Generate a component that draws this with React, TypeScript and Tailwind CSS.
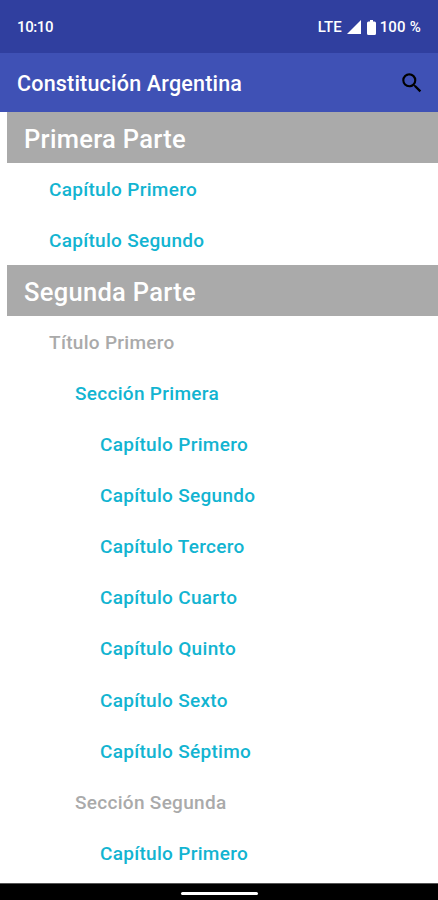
type Row = { text: string; kind: "header" | "link" | "muted"; level: number };

const rows: Row[] = [
  { text: "Primera Parte", kind: "header", level: 0 },
  { text: "Capítulo Primero", kind: "link", level: 1 },
  { text: "Capítulo Segundo", kind: "link", level: 1 },
  { text: "Segunda Parte", kind: "header", level: 0 },
  { text: "Título Primero", kind: "muted", level: 1 },
  { text: "Sección Primera", kind: "link", level: 2 },
  { text: "Capítulo Primero", kind: "link", level: 3 },
  { text: "Capítulo Segundo", kind: "link", level: 3 },
  { text: "Capítulo Tercero", kind: "link", level: 3 },
  { text: "Capítulo Cuarto", kind: "link", level: 3 },
  { text: "Capítulo Quinto", kind: "link", level: 3 },
  { text: "Capítulo Sexto", kind: "link", level: 3 },
  { text: "Capítulo Séptimo", kind: "link", level: 3 },
  { text: "Sección Segunda", kind: "muted", level: 2 },
  { text: "Capítulo Primero", kind: "link", level: 3 },
];

const indent = ["pl-[17px]", "pl-[42px]", "pl-[68px]", "pl-[93px]"];
const look = {
  header: "bg-[#aaaaaa] text-white text-[25.5px] tracking-[0.3px]",
  link: "text-[#12b4d1] text-[19px] tracking-[0.3px]",
  muted: "text-[#aaaaaa] text-[19px] tracking-[0.3px]",
};

export default function App() {
  return (
    <div className="flex h-[900px] w-[438px] flex-col overflow-hidden bg-white font-[Roboto,sans-serif] font-medium">
      <div className="flex h-[53px] shrink-0 items-center justify-between bg-[#303f9f] pr-[17px] pl-[17px] text-[15px] text-white">
        <span className="pt-px tracking-[-0.4px]">10:10</span>
        <div className="flex items-center pt-px">
          <span>LTE</span>
          <svg className="ml-[5px] h-[14px] w-[14px]" viewBox="0 0 14 14" fill="currentColor"><path d="M14 0v14H0z" /></svg>
          <svg className="ml-[6px] h-[15px] w-[9px]" viewBox="0 0 9 15" fill="currentColor"><path d="M3 0h3v1.5h1.5q1.5 0 1.5 1.5v10.5q0 1.5-1.5 1.5h-6q-1.5 0-1.5-1.5V3q0-1.5 1.5-1.5H3z" /></svg>
          <span className="ml-1 tracking-[0.2px]">100 %</span>
        </div>
      </div>
      <header className="flex h-[59px] shrink-0 items-center justify-between bg-[#3f51b5] pr-[13px] pl-[17px]">
        <h1 className="pt-[3px] text-[21.5px] tracking-[0.2px] text-white">Constitución Argentina</h1>
        <svg className="h-[26px] w-[26px]" viewBox="0 0 24 24" fill="#000"><path d="M15.5 14h-.79l-.28-.27A6.47 6.47 0 0 0 16 9.5 6.5 6.5 0 1 0 9.5 16c1.61 0 3.09-.59 4.23-1.57l.27.28v.79l5 4.99L20.49 19l-4.99-5zm-6 0C7.01 14 5 11.99 5 9.5S7.01 5 9.5 5 14 7.01 14 9.5 11.99 14 9.5 14z" /></svg>
      </header>
      <main className="flex flex-1 flex-col pl-[7px]">
        {rows.map((row, i) => (
          <div key={i} className={`flex h-[51.1px] shrink-0 items-center pt-[2.5px] ${indent[row.level]} ${look[row.kind]}`}>
            <span>{row.text}</span>
          </div>
        ))}
      </main>
      <footer className="flex h-[17px] shrink-0 items-center justify-center border-t border-[#555555] bg-black pt-[2px]">
        <div className="h-[3px] w-[77px] rounded-full bg-white" />
      </footer>
    </div>
  );
}
